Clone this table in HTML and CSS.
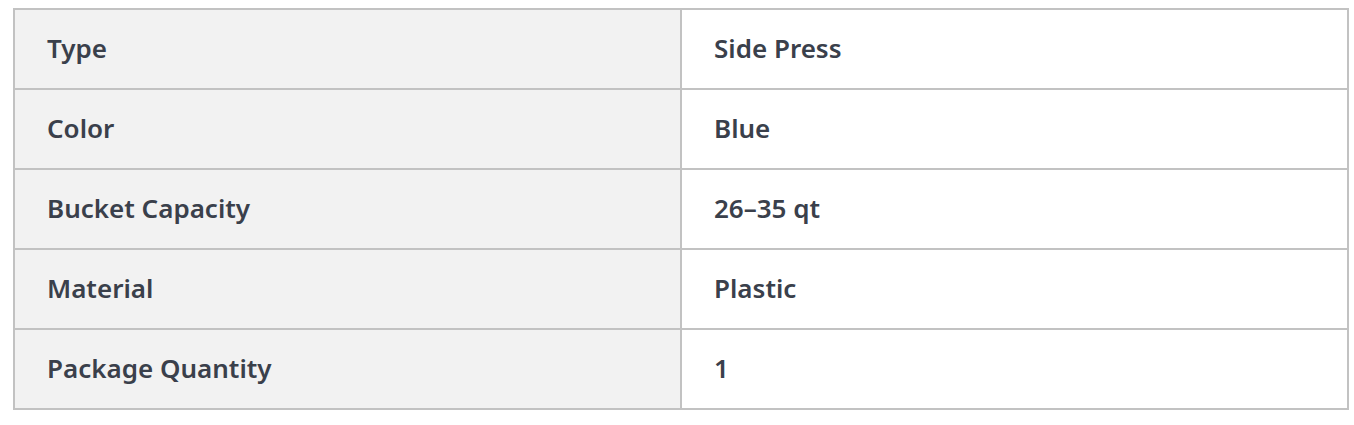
FILE: index.html
```html
<!DOCTYPE html>
<html>
<head>
<meta charset="utf-8">
<link rel="stylesheet" href="styles.css">
</head>
<body>
<table class="specs">
  <tr><td class="label">Type</td><td class="value">Side Press</td></tr>
  <tr><td class="label">Color</td><td class="value">Blue</td></tr>
  <tr><td class="label">Bucket Capacity</td><td class="value">26–35 qt</td></tr>
  <tr><td class="label">Material</td><td class="value">Plastic</td></tr>
  <tr><td class="label">Package Quantity</td><td class="value">1</td></tr>
</table>
</body>
</html>
```

FILE: styles.css
```css
html, body {
  margin: 0;
  background: #ffffff;
}
body {
  padding: 8px 5px 0 13px;
  font-family: "Noto Sans", "Open Sans", sans-serif;
}
.specs {
  width: 1336px;
  border-collapse: collapse;
  table-layout: fixed;
  border: 2px solid #c2c2c2;
}
.specs td {
  height: 80px;
  box-sizing: border-box;
  padding: 0 0 2px 32px;
  border: 2px solid #c2c2c2;
  font-size: 26px;
  font-weight: 600;
  color: #3a404b;
  vertical-align: middle;
}
.specs .label {
  background: #f2f2f2;
}
.specs .value {
  background: #ffffff;
}
```
